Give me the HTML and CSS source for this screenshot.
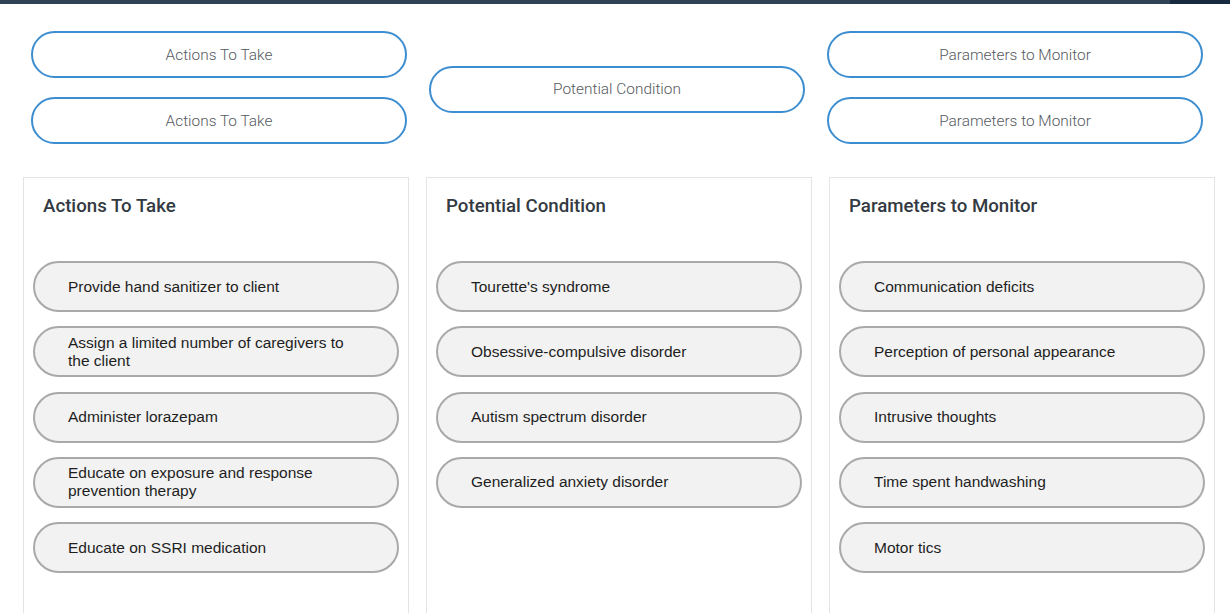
FILE: index.html
```html
<!DOCTYPE html>
<html>
<head>
<meta charset="utf-8">
<link rel="stylesheet" href="styles.css">
</head>
<body>
<div class="topbar"><div class="topbar-end"></div></div>
<div class="targets">
  <div class="target-col">
    <div class="target">Actions To Take</div>
    <div class="target">Actions To Take</div>
  </div>
  <div class="target-col center">
    <div class="target">Potential Condition</div>
  </div>
  <div class="target-col">
    <div class="target">Parameters to Monitor</div>
    <div class="target">Parameters to Monitor</div>
  </div>
</div>
<div class="panels">
  <div class="panel">
    <h2 class="panel-title">Actions To Take</h2>
    <div class="items">
      <div class="item"><span>Provide hand sanitizer to client</span></div>
      <div class="item"><span>Assign a limited number of caregivers to the client</span></div>
      <div class="item"><span>Administer lorazepam</span></div>
      <div class="item"><span>Educate on exposure and response prevention therapy</span></div>
      <div class="item"><span>Educate on SSRI medication</span></div>
    </div>
  </div>
  <div class="panel">
    <h2 class="panel-title">Potential Condition</h2>
    <div class="items">
      <div class="item"><span>Tourette's syndrome</span></div>
      <div class="item"><span>Obsessive-compulsive disorder</span></div>
      <div class="item"><span>Autism spectrum disorder</span></div>
      <div class="item"><span>Generalized anxiety disorder</span></div>
    </div>
  </div>
  <div class="panel">
    <h2 class="panel-title">Parameters to Monitor</h2>
    <div class="items">
      <div class="item"><span>Communication deficits</span></div>
      <div class="item"><span>Perception of personal appearance</span></div>
      <div class="item"><span>Intrusive thoughts</span></div>
      <div class="item"><span>Time spent handwashing</span></div>
      <div class="item"><span>Motor tics</span></div>
    </div>
  </div>
</div>
</body>
</html>
```
FILE: styles.css
```css
* { box-sizing: border-box; }
html, body { margin: 0; padding: 0; background: #ffffff; }
body { height: 613px; overflow: hidden; font-family: "Liberation Sans", Arial, sans-serif; }

.topbar {
  height: 4px;
  background: #2f4256;
  display: flex;
  justify-content: flex-end;
}
.topbar-end { width: 60px; height: 4px; background: #172a40; }

.targets {
  display: grid;
  grid-template-columns: 376px 376px 376px;
  column-gap: 22px;
  padding: 27px 27px 0 31px;
}
.target-col {
  display: flex;
  flex-direction: column;
  gap: 19px;
}
.target-col.center { justify-content: center; padding-top: 3px; }
.target {
  height: 47px;
  border: 2px solid #3d8ed0;
  border-radius: 24px;
  display: flex;
  align-items: center;
  justify-content: center;
  font-family: Roboto, "Liberation Sans", sans-serif;
  font-weight: 300;
  font-size: 15.4px;
  color: #555a60;
}

.panels {
  display: grid;
  grid-template-columns: 386px 386px 386px;
  column-gap: 17px;
  padding: 33px 16px 0 23px;
}
.panel {
  border: 1px solid #e4e4e4;
  height: 460px;
  padding: 0 9px;
}
.panel-title {
  margin: 16px 0 0 10px;
  font-family: Roboto, "Liberation Sans", sans-serif;
  font-weight: 500;
  font-size: 18.7px;
  line-height: 24px;
  color: #333a42;
}
.items {
  margin-top: 43px;
  display: flex;
  flex-direction: column;
  gap: 14.3px;
}
.item {
  height: 51px;
  border: 2px solid #a9a9a9;
  border-radius: 25.5px;
  background: #f2f2f2;
  display: flex;
  align-items: center;
  padding: 0 38px 0 33px;
  font-size: 15.5px;
  line-height: 18px;
  color: #1e1e1e;
}
```
